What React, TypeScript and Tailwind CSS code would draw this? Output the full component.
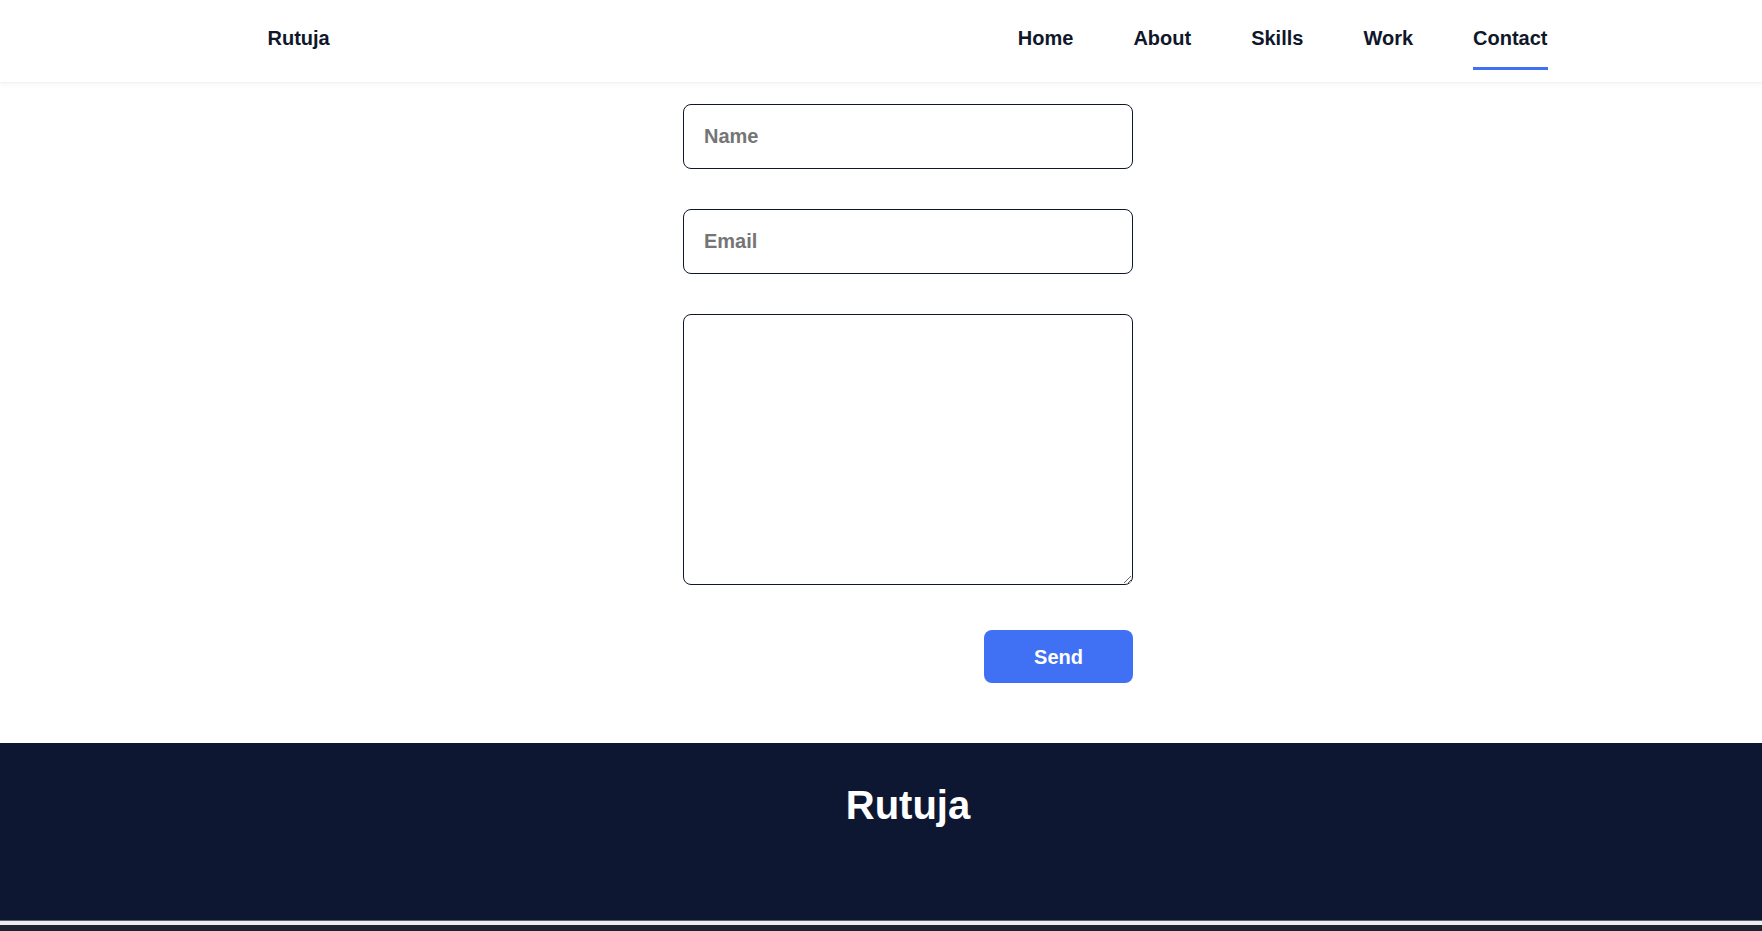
const links = ["Home", "About", "Skills", "Work", "Contact"];

const Header = () => {
  return (
    <header className="h-[83px] bg-white shadow-[0_2px_4px_rgba(0,0,0,0.04)] border-b border-[#f3f3f3] pl-[54px]">
      <div className="mx-auto w-[1281px] flex justify-between items-start">
        <a className="pt-[23px] text-[20px] leading-[30px] font-bold text-[#0f172a]">
          Rutuja
        </a>
        <nav className="flex gap-[60px] pr-[1px]">
          {links.map((item) => (
            <a
              key={item}
              className={
                item === "Contact"
                  ? "pt-[23px] pb-[14px] border-b-[3px] border-[#4070f4] text-[20px] leading-[30px] font-bold text-[#0f172a]"
                  : "pt-[23px] pb-[14px] border-b-[3px] border-transparent text-[20px] leading-[30px] font-bold text-[#0f172a]"
              }
            >
              {item}
            </a>
          ))}
        </nav>
      </div>
    </header>
  );
};

const ContactForm = () => {
  return (
    <section className="pl-[54px] pt-[21px] pb-[60px]">
      <form className="mx-auto w-[450px] flex flex-col">
        <input
          type="text"
          placeholder="Name"
          className="h-[65px] px-5 rounded-lg border border-[#0f172a] text-[20px] font-bold text-[#0f172a] placeholder:text-[#757575] outline-none"
        />
        <input
          type="email"
          placeholder="Email"
          className="mt-[40px] h-[65px] px-5 rounded-lg border border-[#0f172a] text-[20px] font-bold text-[#0f172a] placeholder:text-[#757575] outline-none"
        />
        <textarea className="mt-[40px] h-[271px] px-5 py-4 rounded-lg border border-[#0f172a] text-[20px] font-bold text-[#0f172a] outline-none resize-y" />
        <div className="flex justify-end mt-[45px]">
          <button
            type="button"
            className="w-[149px] h-[53px] rounded-lg bg-[#4070f4] text-white text-[20px] font-bold"
          >
            Send
          </button>
        </div>
      </form>
    </section>
  );
};

const Footer = () => {
  return (
    <footer className="h-[177px] bg-[#0e1731] pl-[54px] pt-[38px]">
      <h2 className="text-center text-[40px] leading-[48px] font-bold text-white">
        Rutuja
      </h2>
    </footer>
  );
};

export default function App() {
  return (
    <div className="min-h-screen bg-white font-['Liberation_Sans',Arial,sans-serif]">
      <Header />
      <ContactForm />
      <Footer />
      <div className="h-[1px] bg-[#5b6170]" />
      <div className="h-[4px] bg-[#eeeeee]" />
      <div className="h-[40px] bg-[#1d2330]" />
    </div>
  );
}
